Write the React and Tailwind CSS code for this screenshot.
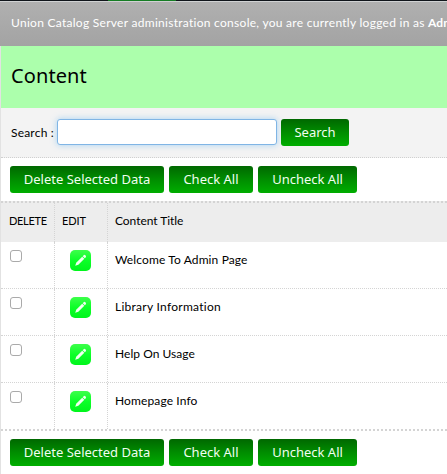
const rows = [
  { title: 'Welcome To Admin Page', text: 'tracking-[0.12px]', height: 'h-[47px] border-b' },
  { title: 'Library Information', text: 'tracking-[0.27px]', height: 'h-[47px] border-b' },
  { title: 'Help On Usage', text: 'tracking-[0.04px]', height: 'h-[47px] border-b' },
  { title: 'Homepage Info', text: 'tracking-[0.12px]', height: 'h-[48px] border-b-2' },
];

function Button({ children, width }) {
  return (
    <button
      type="button"
      className={`${width} h-[27px] shrink-0 rounded-[3px] bg-linear-to-b from-[#006800] via-[#008d00] to-[#00ae00] text-center font-['Noto_Sans',sans-serif] text-[13px] leading-[24px] whitespace-nowrap text-[#f0fff0]`}
    >
      <span className="block h-[27px] leading-[26px]">{children}</span>
    </button>
  );
}

function Actions() {
  return (
    <div className="flex gap-[5px] pl-[9px]">
      <Button width="w-[154px]">Delete Selected Data</Button>
      <Button width="w-[84px]">Check All</Button>
      <Button width="w-[99px]">Uncheck All</Button>
    </div>
  );
}

function EditIcon() {
  return (
    <svg width="21" height="21" viewBox="0 0 21 21" className="block">
      <defs>
        <linearGradient id="edit" x1="0" y1="0" x2="0" y2="1">
          <stop offset="0" stopColor="#3dff4b" />
          <stop offset="0.5" stopColor="#0cff28" />
          <stop offset="1" stopColor="#00f51c" />
        </linearGradient>
      </defs>
      <rect width="21" height="21" rx="5" fill="url(#edit)" />
      <path d="M5.2 15.8 6.2 12.7 12.2 6.7 14.3 8.8 8.3 14.8Z" fill="#f0fff0" />
      <path d="M12.7 6.2 13.9 5Q14.6 4.6 15.3 5.2L15.8 5.8Q16.3 6.5 15.8 7.2L14.8 8.3Z" fill="#f0fff0" />
    </svg>
  );
}

export default function App() {
  return (
    <div className="h-[474px] w-[447px] overflow-hidden bg-white font-[Lato,sans-serif] text-[12px] text-black">
      <div className="flex h-px bg-[#10151b]">
        <div className="ml-[108px] w-[68px] bg-[#167d24]" />
      </div>
      <div className="h-px bg-[#d0d2d3]" />
      <header className="h-11 bg-linear-to-b from-[#b0b0b0] to-[#a3a3a3] pt-[13px] pl-[11px] leading-4 whitespace-nowrap text-white">
        <span className="tracking-[0.28px]">Union Catalog Server administration console, you are currently logged in as </span>
        <b>Adm</b>
      </header>
      <div className="border-l border-[#e2e2e2]">
        <div className="h-[62px] bg-[#acffac] pt-[14px] pl-[10px]">
          <h1 className="font-['Noto_Sans',sans-serif] text-[20px] leading-8 tracking-[0.1px]">Content</h1>
        </div>
        <div className="flex h-[50px] items-start border-b border-dotted border-[#d0d0d0] bg-[#f3f3f3] pt-[11px] pl-[10px]">
          <label htmlFor="q" className="w-[46px] pt-[6px] leading-4 tracking-[0.2px] whitespace-nowrap">Search :</label>
          <input id="q" className="h-[26px] w-[220px] rounded-[3px] border border-[#80b5e5] bg-white shadow-[0_0_6px_rgba(100,180,240,0.55)] outline-none" />
          <div className="ml-[4px]">
            <Button width="w-[68px]">Search</Button>
          </div>
        </div>
        <div className="h-[43px] pt-2">
          <Actions />
        </div>
        <div className="grid h-[41px] grid-cols-[54px_53px_1fr] border-t-2 border-dotted border-[#d4d4d4] bg-[#ededed] leading-4">
          <div className="border-r border-dotted border-[#d4d4d4] pt-[10px] pl-2 text-[11px] tracking-[-0.3px]">DELETE</div>
          <div className="border-r border-dotted border-[#d4d4d4] pt-[10px] pl-[7px] text-[11px] tracking-[-0.1px]">EDIT</div>
          <div className="pt-[10px] pl-[7px] tracking-[-0.05px]">Content Title</div>
        </div>
        {rows.map((r) => (
          <div key={r.title} className={`grid grid-cols-[54px_53px_1fr] border-dotted border-[#d4d4d4] ${r.height}`}>
            <div className="border-r border-dotted border-[#d4d4d4] pt-2 pl-[9px]">
              <input type="checkbox" aria-label={r.title} className="block size-3 appearance-none rounded-[3px] border border-[#aaa] bg-white" />
            </div>
            <div className="border-r border-dotted border-[#d4d4d4] pt-2 pl-[15px]">
              <EditIcon />
            </div>
            <div className={`pt-[10px] pl-[7px] leading-4 ${r.text}`}>{r.title}</div>
          </div>
        ))}
        <div className="h-11 pt-2">
          <Actions />
        </div>
      </div>
    </div>
  );
}
